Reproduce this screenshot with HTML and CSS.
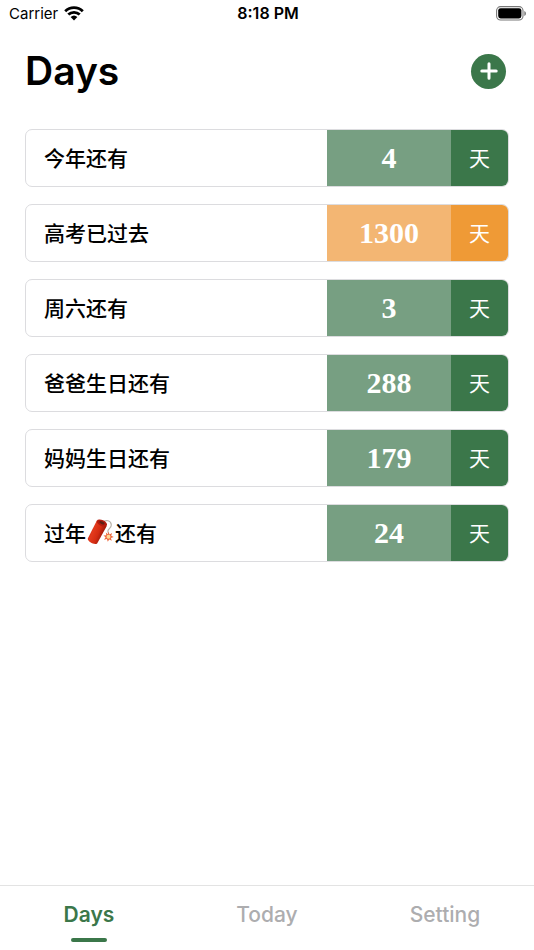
FILE: index.html
```html
<!DOCTYPE html>
<html lang="zh-CN">
<head>
  <meta charset="utf-8">
  <meta name="viewport" content="width=device-width, initial-scale=1">
  <title>Days</title>
  <link rel="stylesheet" href="styles.css">
</head>
<body>
  <div class="status">
    <span class="carrier">Carrier
      <svg class="wifi" viewBox="0 0 20 15" aria-hidden="true">
        <g fill="none" stroke="currentColor" stroke-width="2.8">
          <path d="M1.200 5.200a12.600 12.600 0 0 1 17.600 0"/>
          <path d="M4.300 8.600a8.200 8.200 0 0 1 11.400 0"/>
        </g>
        <path fill="currentColor" d="M6.600 11a5 5 0 0 1 6.800 0L10 14.500z"/>
      </svg>
    </span>
    <time class="clock">8:18 PM</time>
    <svg class="battery" viewBox="0 0 32 15" aria-hidden="true">
      <rect x="1.600" y=".6" width="26.400" height="13.400" rx="4" fill="none" stroke="#777" stroke-width="1.100"/>
      <rect x="3.200" y="2.200" width="23.200" height="10.200" rx="2.400" fill="#000"/>
      <path d="M29.300 5c2.200.8 2.200 4.200 0 5z" fill="#777"/>
    </svg>
  </div>

  <header class="header">
    <h1 class="title">Days</h1>
    <button class="add" type="button" aria-label="Add">
      <svg class="plus" viewBox="0 0 18 18" aria-hidden="true">
        <path d="M9 1.800v14.400M1.800 9h14.400" fill="none" stroke="currentColor" stroke-width="3" stroke-linecap="round"/>
      </svg>
    </button>
  </header>

  <main class="main">
    <ul class="list">
      <li class="card"><span class="name">今年还有</span><span class="count">4</span><span class="unit">天</span></li>
      <li class="card past"><span class="name">高考已过去</span><span class="count">1300</span><span class="unit">天</span></li>
      <li class="card"><span class="name">周六还有</span><span class="count">3</span><span class="unit">天</span></li>
      <li class="card"><span class="name">爸爸生日还有</span><span class="count">288</span><span class="unit">天</span></li>
      <li class="card"><span class="name">妈妈生日还有</span><span class="count">179</span><span class="unit">天</span></li>
      <li class="card"><span class="name">过年<svg class="cracker" viewBox="0 0 28 26" role="img" aria-label="firecracker">
        <defs>
          <linearGradient id="tube" x1="0" y1="0" x2="1" y2=".5">
            <stop offset="0" stop-color="#a51c0c"/>
            <stop offset=".4" stop-color="#e33a1c"/>
            <stop offset=".65" stop-color="#d42c12"/>
            <stop offset="1" stop-color="#7f1006"/>
          </linearGradient>
        </defs>
        <path d="M16 3C19.500.5 24.600 1.200 24.800 6c.1 3.400-3.600 3.700-3.400 6.200.1 1.600 1 2.200 1 3.800" fill="none" stroke="#b9b3ab" stroke-width="1.200"/>
        <path d="M10.400 1.600 1.400 19.200c-1.200 3.200 7.200 7.700 9.400 5L20.400 6.800z" fill="url(#tube)"/>
        <ellipse cx="15.400" cy="4" rx="5.500" ry="2.900" transform="rotate(25 15.400 4)" fill="#b51c0e"/>
        <ellipse cx="15.500" cy="3.700" rx="2.900" ry="1.300" transform="rotate(25 15.500 3.700)" fill="#5f2114"/>
        <path d="m21.700 12.600 1.200 2.800 2.700-1.500-.9 2.900 2.600 1.200-2.900.9.900 2.800-2.600-1.300-1.400 2.400-.9-2.700-2.900.7 1.600-2.500-2.200-1.700 2.900-.4-.5-2.800 2.100 1.900z" fill="#ee6a3f"/>
        <circle cx="22" cy="17.700" r="2" fill="#ffd894"/>
      </svg>还有</span><span class="count">24</span><span class="unit">天</span></li>
    </ul>
  </main>

  <nav class="tabs">
    <a class="tab active" href="#days" aria-current="page">Days</a>
    <a class="tab" href="#today">Today</a>
    <a class="tab" href="#setting">Setting</a>
  </nav>
</body>
</html>
```
FILE: styles.css
```css
* { box-sizing: border-box; }

body {
  display: flex;
  flex-direction: column;
  min-height: 100vh;
  margin: 0;
  background: #fff;
  color: #000;
  font-family: Inter, "Noto Sans CJK SC", sans-serif;
}

.status {
  display: grid;
  grid-template-columns: 1fr auto 1fr;
  align-items: center;
  height: 26px;
  padding: 0 7px 0 9px;
  font-size: 15px;
}

.carrier {
  display: flex;
  align-items: center;
  gap: 6px;
}

.wifi { width: 20px; height: 15px; }
.clock { font-size: 16px; font-weight: 600; }
.battery { width: 32px; height: 15px; justify-self: end; }

.header {
  display: flex;
  align-items: center;
  justify-content: space-between;
  height: 90px;
  padding: 0 28px 0 25px;
}

.title {
  margin: 0;
  font-size: 39px;
  font-weight: 600;
  line-height: 48px;
}

.add {
  display: grid;
  place-items: center;
  width: 35px;
  height: 35px;
  padding: 0;
  border: 0;
  border-radius: 50%;
  background: #3b774a;
  color: #fff;
}

.plus { width: 18px; height: 18px; }

.main {
  flex: 1;
  padding: 13px 25px;
}

.list {
  display: grid;
  gap: 17px;
  margin: 0;
  padding: 0;
  list-style: none;
}

.card {
  display: flex;
  height: 58px;
  border: 1px solid #dcdcdf;
  border-radius: 7px;
  overflow: hidden;
}

.name, .count, .unit {
  display: flex;
  align-items: center;
}

.name {
  flex: 1;
  padding: 0 0 2px 18px;
  font-size: 21px;
  font-weight: 500;
}

.count {
  justify-content: center;
  width: 124px;
  background: #779f82;
  color: #fff;
  font-family: "Liberation Serif", serif;
  font-size: 30px;
  font-weight: 700;
}

.unit {
  justify-content: center;
  width: 57px;
  padding-bottom: 2px;
  background: #3b774a;
  color: #fff;
  font-size: 21px;
}

.past .count { background: #f3b673; }
.past .unit { background: #ef9a36; }

.cracker { width: 29px; height: 26px; }

.tabs {
  display: grid;
  grid-template-columns: repeat(3, 1fr);
  height: 65px;
  border-top: 1px solid #e3e3e3;
}

.tab {
  display: flex;
  flex-direction: column;
  align-items: center;
  gap: 10px;
  padding-top: 15px;
  color: #adadaf;
  font-size: 21px;
  font-weight: 500;
  line-height: 27px;
  text-decoration: none;
}

.active {
  color: #3b774a;
  font-weight: 600;
}

.active::after {
  content: "";
  width: 36px;
  height: 4px;
  border-radius: 2px;
  background: #3b774a;
}
```
